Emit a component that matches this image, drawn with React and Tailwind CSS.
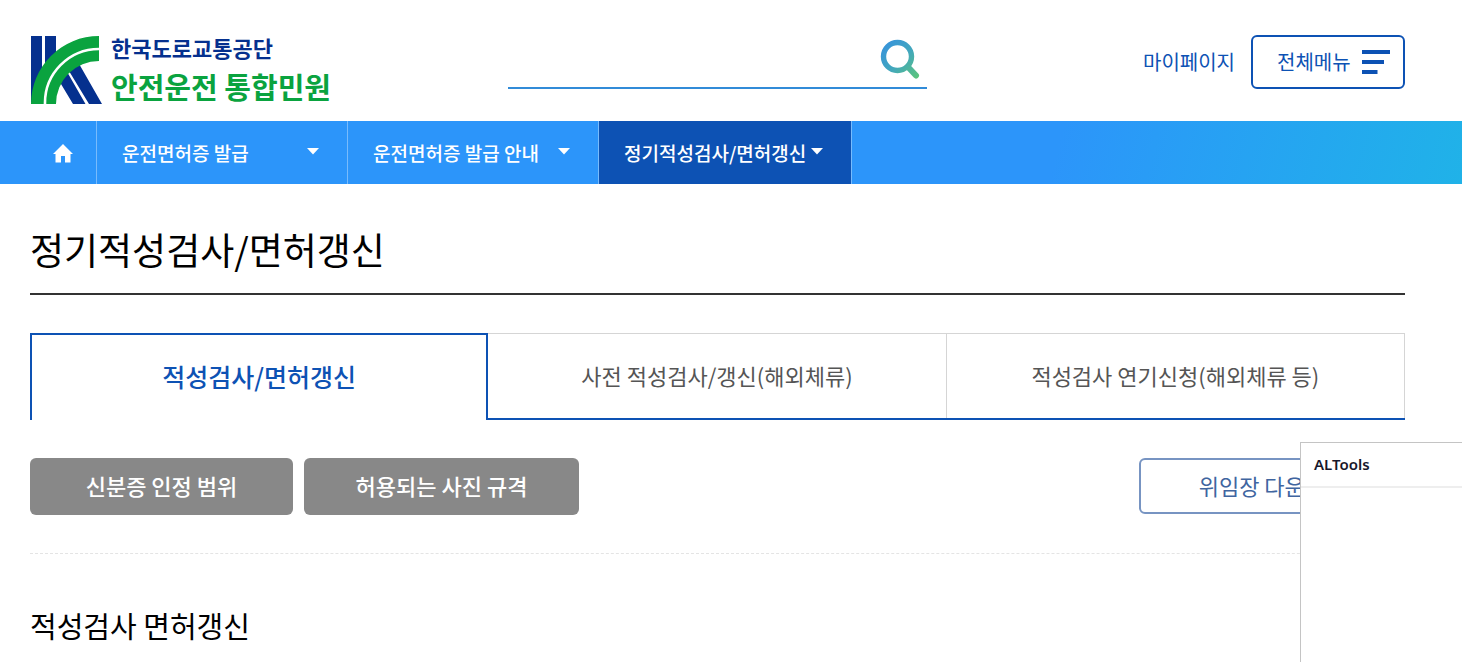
import React from "react";

const trail = [
  { label: "운전면허증 발급", active: false },
  { label: "운전면허증 발급 안내", active: false },
  { label: "정기적성검사/면허갱신", active: true },
];

const tabs = [
  { label: "적성검사/면허갱신", active: true },
  { label: "사전 적성검사/갱신(해외체류)", active: false },
  { label: "적성검사 연기신청(해외체류 등)", active: false },
];

function LogoMark() {
  return (
    <svg viewBox="0 0 71 68" className="h-[68px] w-[71px] shrink-0" aria-hidden="true">
      <path d="M0 0H11V40L0 68ZM14 0H25V18L14 32Z" fill="#05308e" />
      <path d="M27 43L35 34L54.500 68H42ZM38 35L47 26L71 68H58Z" fill="#05308e" />
      <path d="M0 68A68 68 0 0 1 68 0V25A43 43 0 0 0 25 68Z" fill="#0aa33f" />
      <path d="M14 68A54 54 0 0 1 68 13" fill="none" stroke="#fff" strokeWidth="2.600" />
    </svg>
  );
}

function SearchIcon() {
  return (
    <svg viewBox="0 0 40 40" className="size-10" aria-hidden="true">
      <defs>
        <linearGradient id="lens" gradientUnits="userSpaceOnUse" x1="4" y1="4" x2="38" y2="38">
          <stop offset="0" stopColor="#3793dc" />
          <stop offset="0.500" stopColor="#42a7bd" />
          <stop offset="1" stopColor="#5bc47c" />
        </linearGradient>
      </defs>
      <circle cx="17.500" cy="17.500" r="14" fill="none" stroke="url(#lens)" strokeWidth="5.400" />
      <path d="M28 28L36 36.500" stroke="url(#lens)" strokeWidth="6" strokeLinecap="round" />
    </svg>
  );
}

function Caret() {
  return (
    <svg viewBox="0 0 12 7" className="mb-0.5 h-[7px] w-3 shrink-0" aria-hidden="true">
      <path d="M0 0H12L6 6.500Z" fill="#fff" />
    </svg>
  );
}

export default function App() {
  return (
    <div className="min-h-screen overflow-x-hidden bg-white font-['Noto_Sans_CJK_KR','Noto_Sans',sans-serif] text-black">
      <header className="grid grid-cols-[1fr_419px_1fr] items-start pt-[35px] pr-[57px] pb-[15px] pl-[30px]">
        <a href="#home" className="flex items-start gap-[9px] pt-px pl-px">
          <LogoMark />
          <span className="flex flex-col gap-2 font-bold whitespace-nowrap">
            <span className="text-[22px] leading-[22px] text-[#05308e]">한국도로교통공단</span>
            <span className="text-[29px] leading-10 text-[#0aa33f]">안전운전 통합민원</span>
          </span>
        </a>
        <form className="flex h-[54px] items-center border-b-2 border-[#318bd8] pr-[7px] pb-1" role="search">
          <input type="search" aria-label="검색어" className="h-10 min-w-0 flex-1 bg-transparent text-lg outline-none" />
          <button type="button" aria-label="검색">
            <SearchIcon />
          </button>
        </form>
        <div className="flex items-center justify-end gap-4 text-[#0d52b4]">
          <a href="#mypage" className="text-[20px] leading-8">마이페이지</a>
          <button type="button" className="flex h-[54px] w-[154px] items-center justify-between rounded-md border-2 border-[#0d52b4] pr-[13px] pl-6 text-[20px] leading-8">
            전체메뉴
            <svg viewBox="0 0 28 24" className="h-6 w-7" aria-hidden="true">
              <path d="M0 0H28V4H0ZM0 10H22V14H0ZM0 20H15.500V24H0Z" fill="#0d52b4" />
            </svg>
          </button>
        </div>
      </header>

      <nav aria-label="현재 위치" className="flex h-[63px] bg-linear-105 from-[#2c95fa] from-72% to-[#20b2e8] pl-[30px]">
        <a href="#home" aria-label="홈" className="flex w-[67px] items-center justify-center border-r border-[#78bbfc] pt-0.5">
          <svg viewBox="0 0 20 19" className="h-[19px] w-5" aria-hidden="true">
            <path d="M10 0L20 10H17.500V18.500H12V12H8V18.500H2.500V10H0Z" fill="#fff" />
          </svg>
        </a>
        {trail.map((item) => (
          <button
            key={item.label}
            type="button"
            className={
              item.active
                ? "flex w-[253px] items-center justify-between border-r border-[#78bbfc] bg-[#0d52b4] pr-7 pl-[25px] text-[19px] leading-8 font-medium text-white"
                : "flex w-[251px] items-center justify-between border-r border-[#78bbfc] pr-7 pl-[25px] text-[19px] leading-8 font-medium text-white"
            }
          >
            {item.label}
            <Caret />
          </button>
        ))}
      </nav>

      <main className="pt-[37px] pr-[57px] pb-4 pl-[30px]">
        <h1 className="border-b-2 border-[#333] pb-4 text-[37px] leading-[56px]">정기적성검사/면허갱신</h1>

        <div role="tablist" className="mt-[38px] grid grid-cols-3">
          {tabs.map((tab) => (
            <button
              key={tab.label}
              type="button"
              role="tab"
              aria-selected={tab.active}
              className={
                tab.active
                  ? "h-[87px] border-x-2 border-t-2 border-[#0d52b4] pb-0.5 text-[25px] font-medium text-[#0d52b4]"
                  : "flex h-[87px] flex-col border-b-2 border-[#0d52b4] text-[22px] text-[#555]"
              }
            >
              {tab.active ? (
                tab.label
              ) : (
                <span className="flex w-full flex-1 items-center justify-center border-t border-r border-[#d5d5d5] pb-px">
                  {tab.label}
                </span>
              )}
            </button>
          ))}
        </div>

        <div className="flex items-start justify-between border-b border-dashed border-[#e4e4e4] pt-[38px] pb-[38px]">
          <div className="flex gap-[11px]">
            <button type="button" className="h-[57px] w-[263px] rounded-md bg-[#888] pb-0.5 text-[22px] font-medium text-white">
              신분증 인정 범위
            </button>
            <button type="button" className="h-[57px] w-[275px] rounded-md bg-[#888] pb-0.5 text-[22px] font-medium text-white">
              허용되는 사진 규격
            </button>
          </div>
          <button type="button" className="h-[56px] w-[266px] rounded-md border-2 border-[#7794c2] pb-0.5 text-[22px] text-[#40659f]">
            위임장 다운로드
          </button>
        </div>

        <h2 className="mt-[47px] text-[29px] leading-[48px]">적성검사 면허갱신</h2>
      </main>

      <aside aria-label="ALTools" className="fixed right-0 bottom-0 h-[220px] w-[162px] border-t border-l border-[#c4c4c4] bg-white">
        <p className="border-b-2 border-[#eee] pt-[9px] pb-[10px] pl-[13px] font-['Noto_Sans','Open_Sans',sans-serif] text-[15px] leading-6 font-semibold text-[#17172b]">
          ALTools
        </p>
      </aside>
    </div>
  );
}
